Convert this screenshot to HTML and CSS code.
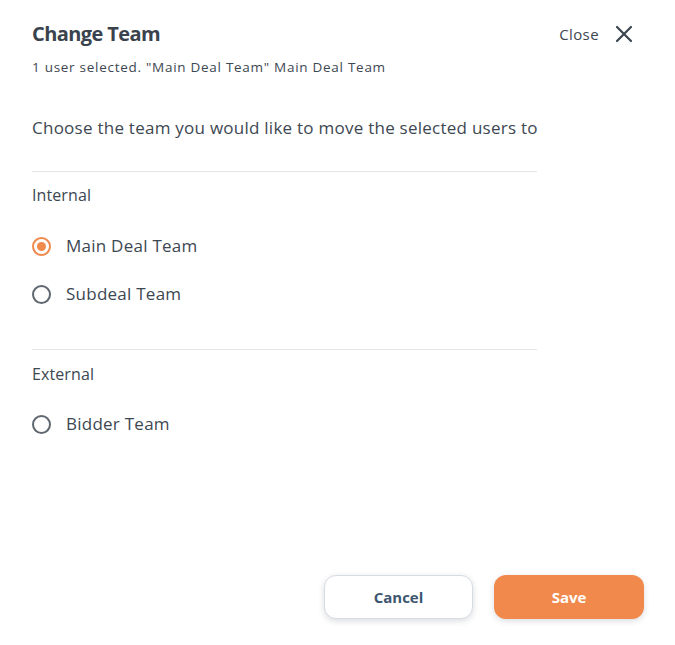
FILE: index.html
```html
<!DOCTYPE html>
<html lang="en">
<head>
<meta charset="utf-8">
<title>Change Team</title>
<link rel="stylesheet" href="styles.css">
</head>
<body>
<div class="dialog">
  <header class="head">
    <div class="titles">
      <h1 class="title">Change Team</h1>
      <p class="subtitle">1 user selected. "Main Deal Team" Main Deal Team</p>
    </div>
    <button class="close" type="button">
      <span>Close</span>
      <svg width="18" height="18" viewBox="0 0 18 18" aria-hidden="true"><path d="M2 2 L16 16 M16 2 L2 16" stroke="#3c4650" stroke-width="2.2" stroke-linecap="round" fill="none"/></svg>
    </button>
  </header>
  <main class="body">
    <p class="lead">Choose the team you would like to move the selected users to</p>
    <section class="group">
      <h2 class="group-title">Internal</h2>
      <label class="radio"><span class="dot checked"></span><span>Main Deal Team</span></label>
      <label class="radio"><span class="dot"></span><span>Subdeal Team</span></label>
    </section>
    <section class="group">
      <h2 class="group-title">External</h2>
      <label class="radio"><span class="dot"></span><span>Bidder Team</span></label>
    </section>
  </main>
  <footer class="actions">
    <button class="btn btn-cancel" type="button">Cancel</button>
    <button class="btn btn-save" type="button">Save</button>
  </footer>
</div>
</body>
</html>
```
FILE: styles.css
```css
html, body { margin: 0; padding: 0; background: #fff; }
body { font-family: "Open Sans", "Noto Sans", sans-serif; color: #3d4752; }
.dialog {
  box-sizing: border-box;
  min-height: 645px;
  padding: 20px 31px 26px 32px;
  display: flex;
  flex-direction: column;
}
.head { display: flex; justify-content: space-between; align-items: flex-start; }
.title { margin: 0; font-size: 20px; line-height: 28px; font-weight: 700; color: #3a434d; letter-spacing: -0.6px; }
.subtitle { margin: 10px 0 0; font-size: 13.5px; line-height: 18px; color: #3d4752; letter-spacing: 0.72px; }
.close {
  display: flex; align-items: center; gap: 16px;
  border: 0; background: none; padding: 0; margin: 5px 11px 0 0;
  font-family: inherit; font-size: 15px; color: #3d4752; line-height: 18px; letter-spacing: 0.4px;
}
.body { width: 505px; }
.lead { margin: 40px 0 0; font-size: 17px; line-height: 24px; letter-spacing: 0.25px; white-space: nowrap; padding-bottom: 31px; border-bottom: 1px solid #e3e5e8; }
.group-title { margin: 11px 0 0; font-size: 16px; line-height: 24px; font-weight: 400; letter-spacing: 0.1px; }
.group:first-of-type { padding-bottom: 43px; border-bottom: 1px solid #e3e5e8; }
.group + .group .group-title { margin-top: 12px; }
.radio { display: flex; align-items: center; gap: 15px; font-size: 17px; line-height: 24px; letter-spacing: 0.25px; margin-top: 24px; }
.group-title + .radio { margin-top: 27px; }
.group + .group .group-title + .radio { margin-top: 26px; }
.dot {
  box-sizing: border-box; width: 19px; height: 19px; border-radius: 50%;
  border: 2px solid #5f6870; display: flex; align-items: center; justify-content: center;
}
.dot.checked { border-color: #ef8a4c; }
.dot.checked::after { content: ""; width: 9px; height: 9px; border-radius: 50%; background: #ef8a4c; }
.actions { margin-top: auto; display: flex; justify-content: flex-end; gap: 21px; }
.btn {
  height: 44px; border-radius: 12px; font-family: inherit; font-size: 15px; font-weight: 700;
}
.btn-cancel { width: 149px; background: #fff; border: 1px solid #d6dce4; color: #3d5670; box-shadow: 0 2px 6px rgba(30, 40, 60, 0.16); }
.btn-save { width: 150px; background: #f0894b; border: 0; color: #fff; box-shadow: 0 2px 6px rgba(30, 40, 60, 0.16); }
```
